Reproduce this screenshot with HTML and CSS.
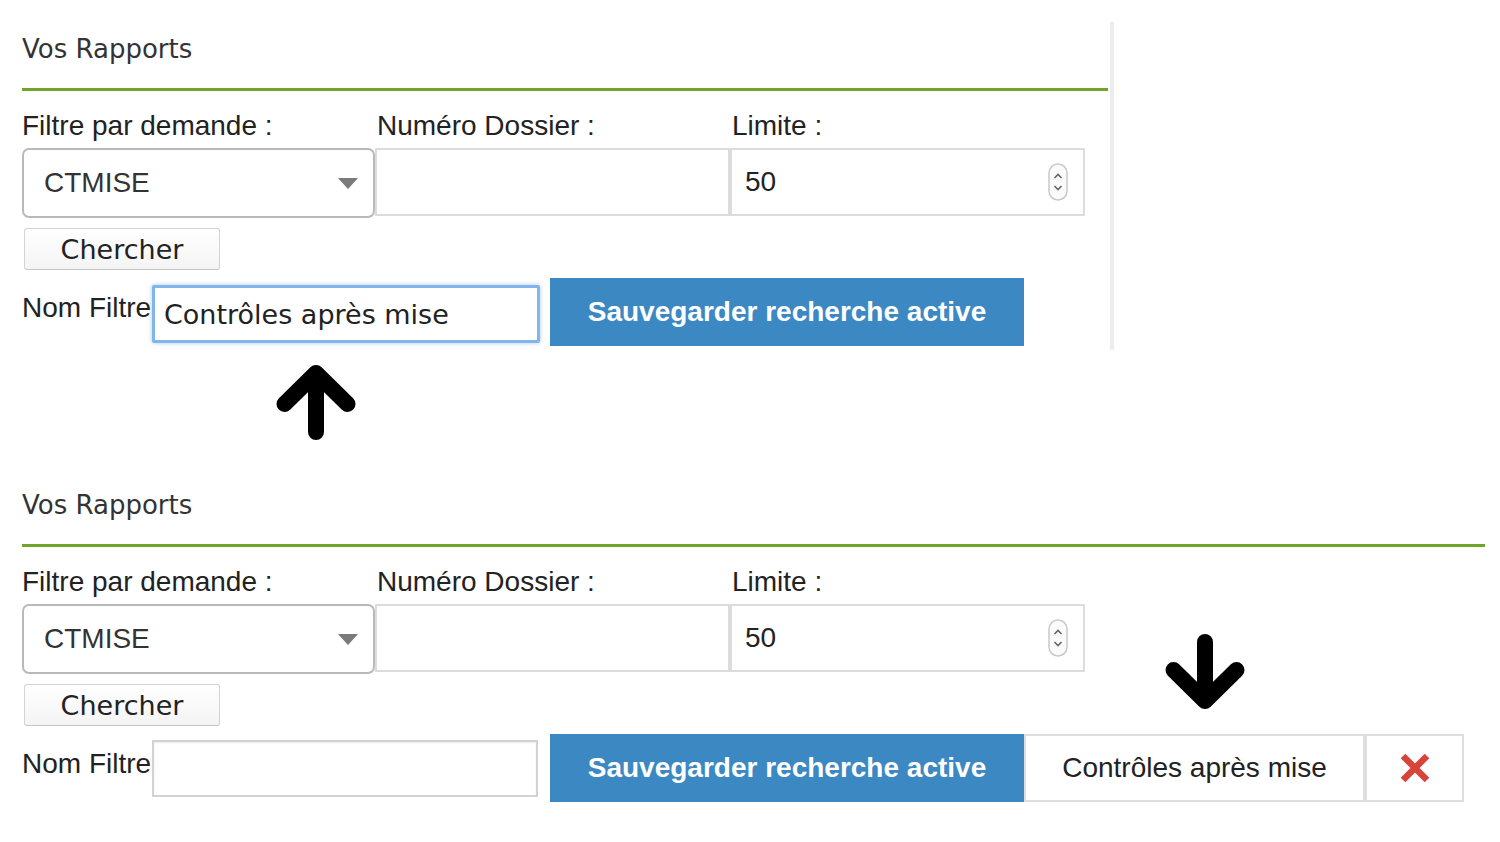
FILE: index.html
```html
<!DOCTYPE html>
<html lang="fr">
<head>
<meta charset="utf-8">
<title>Vos Rapports</title>
<link rel="stylesheet" href="styles.css">
</head>
<body>
<div class="page">
  <section class="panel panel-top">
    <h2 class="title">Vos Rapports</h2>
    <div class="rule"></div>
    <div class="filters">
      <div class="field">
        <span class="field-label">Filtre par demande :</span>
        <div class="select"><span>CTMISE</span>
          <svg class="select-arrow" width="20" height="11" viewBox="0 0 20 11"><polygon points="0,0 20,0 10,11" fill="#7a7a7a"/></svg>
        </div>
      </div>
      <div class="field">
        <span class="field-label">Numéro Dossier :</span>
        <div class="text-box"></div>
      </div>
      <div class="field">
        <span class="field-label">Limite :</span>
        <div class="text-box number"><span>50</span>
          <svg class="spinner" width="20" height="38" viewBox="0 0 20 38"><rect x="1" y="1" width="18" height="36" rx="9" fill="#fbfbfb" stroke="#c9c9c9" stroke-width="1.5"/><polyline points="6.5,15 10,11.5 13.5,15" fill="none" stroke="#666" stroke-width="1.6"/><polyline points="6.5,23 10,26.5 13.5,23" fill="none" stroke="#666" stroke-width="1.6"/></svg>
        </div>
      </div>
    </div>
    <button class="btn-search">Chercher</button>
    <div class="save-row">
      <span class="save-label">Nom Filtre</span>
      <div class="name-input focused">Contrôles après mise</div>
      <button class="btn-save">Sauvegarder recherche active</button>
    </div>
  </section>

  <div class="hint-up">
    <svg width="80" height="78" viewBox="0 0 80 78"><path d="M8.5 40 L40 9 L71.5 40 M40 9 V68" fill="none" stroke="#000" stroke-width="16" stroke-linecap="round" stroke-linejoin="round"/></svg>
  </div>

  <section class="panel panel-bottom">
    <h2 class="title">Vos Rapports</h2>
    <div class="rule"></div>
    <div class="filters">
      <div class="field">
        <span class="field-label">Filtre par demande :</span>
        <div class="select"><span>CTMISE</span>
          <svg class="select-arrow" width="20" height="11" viewBox="0 0 20 11"><polygon points="0,0 20,0 10,11" fill="#7a7a7a"/></svg>
        </div>
      </div>
      <div class="field">
        <span class="field-label">Numéro Dossier :</span>
        <div class="text-box"></div>
      </div>
      <div class="field">
        <span class="field-label">Limite :</span>
        <div class="text-box number"><span>50</span>
          <svg class="spinner" width="20" height="38" viewBox="0 0 20 38"><rect x="1" y="1" width="18" height="36" rx="9" fill="#fbfbfb" stroke="#c9c9c9" stroke-width="1.5"/><polyline points="6.5,15 10,11.5 13.5,15" fill="none" stroke="#666" stroke-width="1.6"/><polyline points="6.5,23 10,26.5 13.5,23" fill="none" stroke="#666" stroke-width="1.6"/></svg>
        </div>
      </div>
    </div>
    <button class="btn-search">Chercher</button>
    <div class="save-row">
      <span class="save-label">Nom Filtre</span>
      <div class="name-input empty"></div>
      <button class="btn-save btn-save-bottom">Sauvegarder recherche active</button>
      <div class="saved-filter">Contrôles après mise</div>
      <div class="saved-delete">
        <svg width="30" height="30" viewBox="0 0 30 30"><path d="M3 3 L27 27 M27 3 L3 27" stroke="#d8443a" stroke-width="6.5" fill="none"/></svg>
      </div>
    </div>
    <svg class="hint-down" width="80" height="78" viewBox="0 0 80 78"><path d="M8.5 38 L40 69 L71.5 38 M40 69 V10" fill="none" stroke="#000" stroke-width="16" stroke-linecap="round" stroke-linejoin="round"/></svg>
  </section>
</div>
</body>
</html>
```
FILE: styles.css
```css
html, body {
  margin: 0;
  background: #fff;
}

body {
  font-family: "Liberation Sans", Arial, sans-serif;
  color: #222;
}

.page {
  padding-top: 22px;
}

.panel {
  position: relative;
  margin-left: 22px;
  padding-top: 12px;
  box-sizing: border-box;
}

.panel-top {
  width: 1092px;
  border-right: 4px solid #ededed;
  padding-bottom: 4px;
}

.panel-bottom {
  width: 1463px;
}

.title {
  margin: 0;
  font-family: "DejaVu Sans", sans-serif;
  font-weight: 400;
  font-size: 26px;
  line-height: 30px;
  color: #333;
}

.rule {
  height: 3px;
  margin-top: 24px;
  background: #6fa52a;
}

.panel-top .rule {
  margin-right: 2px;
}

.filters {
  display: grid;
  grid-template-columns: repeat(3, 355px);
  margin-top: 19px;
}

.field-label {
  display: block;
  font-size: 28px;
  line-height: 32px;
  color: #222;
  white-space: nowrap;
  margin-bottom: 6px;
}

.select {
  display: flex;
  align-items: center;
  box-sizing: border-box;
  width: 353px;
  height: 70px;
  padding-left: 20px;
  padding-right: 15px;
  border: 2px solid #b9b9b9;
  border-radius: 7px;
  font-size: 28px;
  color: #333;
  background: #fff;
}

.select-arrow {
  margin-left: auto;
  display: block;
}

.text-box {
  display: flex;
  align-items: center;
  box-sizing: border-box;
  width: 355px;
  height: 68px;
  margin-left: -2px;
  border: 2px solid #dcdcdc;
  background: #fff;
}

.text-box.number {
  padding-left: 13px;
  padding-right: 15px;
  font-size: 28px;
  color: #222;
}

.spinner {
  display: block;
  margin-left: auto;
}

.btn-search {
  display: block;
  box-sizing: border-box;
  width: 196px;
  height: 42px;
  margin: 10px 0 0 2px;
  padding: 0;
  border: 1px solid #d4d4d4;
  border-bottom-color: #c4c4c4;
  border-radius: 3px;
  background: linear-gradient(#ffffff, #f4f4f4);
  font-family: "DejaVu Sans", sans-serif;
  font-size: 27px;
  color: #222;
}

.save-row {
  display: flex;
  align-items: flex-start;
  margin-top: 8px;
}

.save-label {
  margin-top: 14px;
  width: 130px;
  font-size: 28px;
  line-height: 32px;
  color: #222;
  white-space: nowrap;
}

.name-input {
  box-sizing: border-box;
  display: flex;
  align-items: center;
  font-family: "DejaVu Sans", sans-serif;
  font-size: 27px;
  color: #222;
  background: #fff;
}

.name-input.focused {
  width: 388px;
  height: 58px;
  margin-top: 7px;
  padding-left: 9px;
  border: 3px solid #84b5ea;
  border-radius: 2px;
  box-shadow: 0 0 4px rgba(95, 155, 225, 0.55);
}

.name-input.empty {
  width: 386px;
  height: 57px;
  margin-top: 6px;
  border: 2px solid #d2d2d2;
  box-shadow: inset 0 1px 2px rgba(0, 0, 0, 0.08);
}

.btn-save {
  box-sizing: border-box;
  width: 474px;
  height: 68px;
  margin-left: 10px;
  padding: 0;
  border: none;
  background: #3b88c3;
  color: #fff;
  font-family: "Liberation Sans", Arial, sans-serif;
  font-weight: 700;
  font-size: 28px;
}

.btn-save-bottom {
  margin-left: 12px;
}

.saved-filter {
  box-sizing: border-box;
  display: flex;
  align-items: center;
  justify-content: center;
  width: 341px;
  height: 68px;
  border: 2px solid #dedede;
  font-size: 28px;
  color: #222;
  white-space: nowrap;
}

.saved-delete {
  box-sizing: border-box;
  display: flex;
  align-items: center;
  justify-content: center;
  width: 99px;
  height: 68px;
  border: 2px solid #dedede;
}

.saved-delete svg {
  display: block;
}

.hint-up {
  box-sizing: border-box;
  height: 128px;
  padding-top: 14px;
  padding-left: 276px;
}

.hint-up svg {
  display: block;
}

.hint-down {
  position: absolute;
  left: 1143px;
  top: 154px;
  display: block;
}
```
